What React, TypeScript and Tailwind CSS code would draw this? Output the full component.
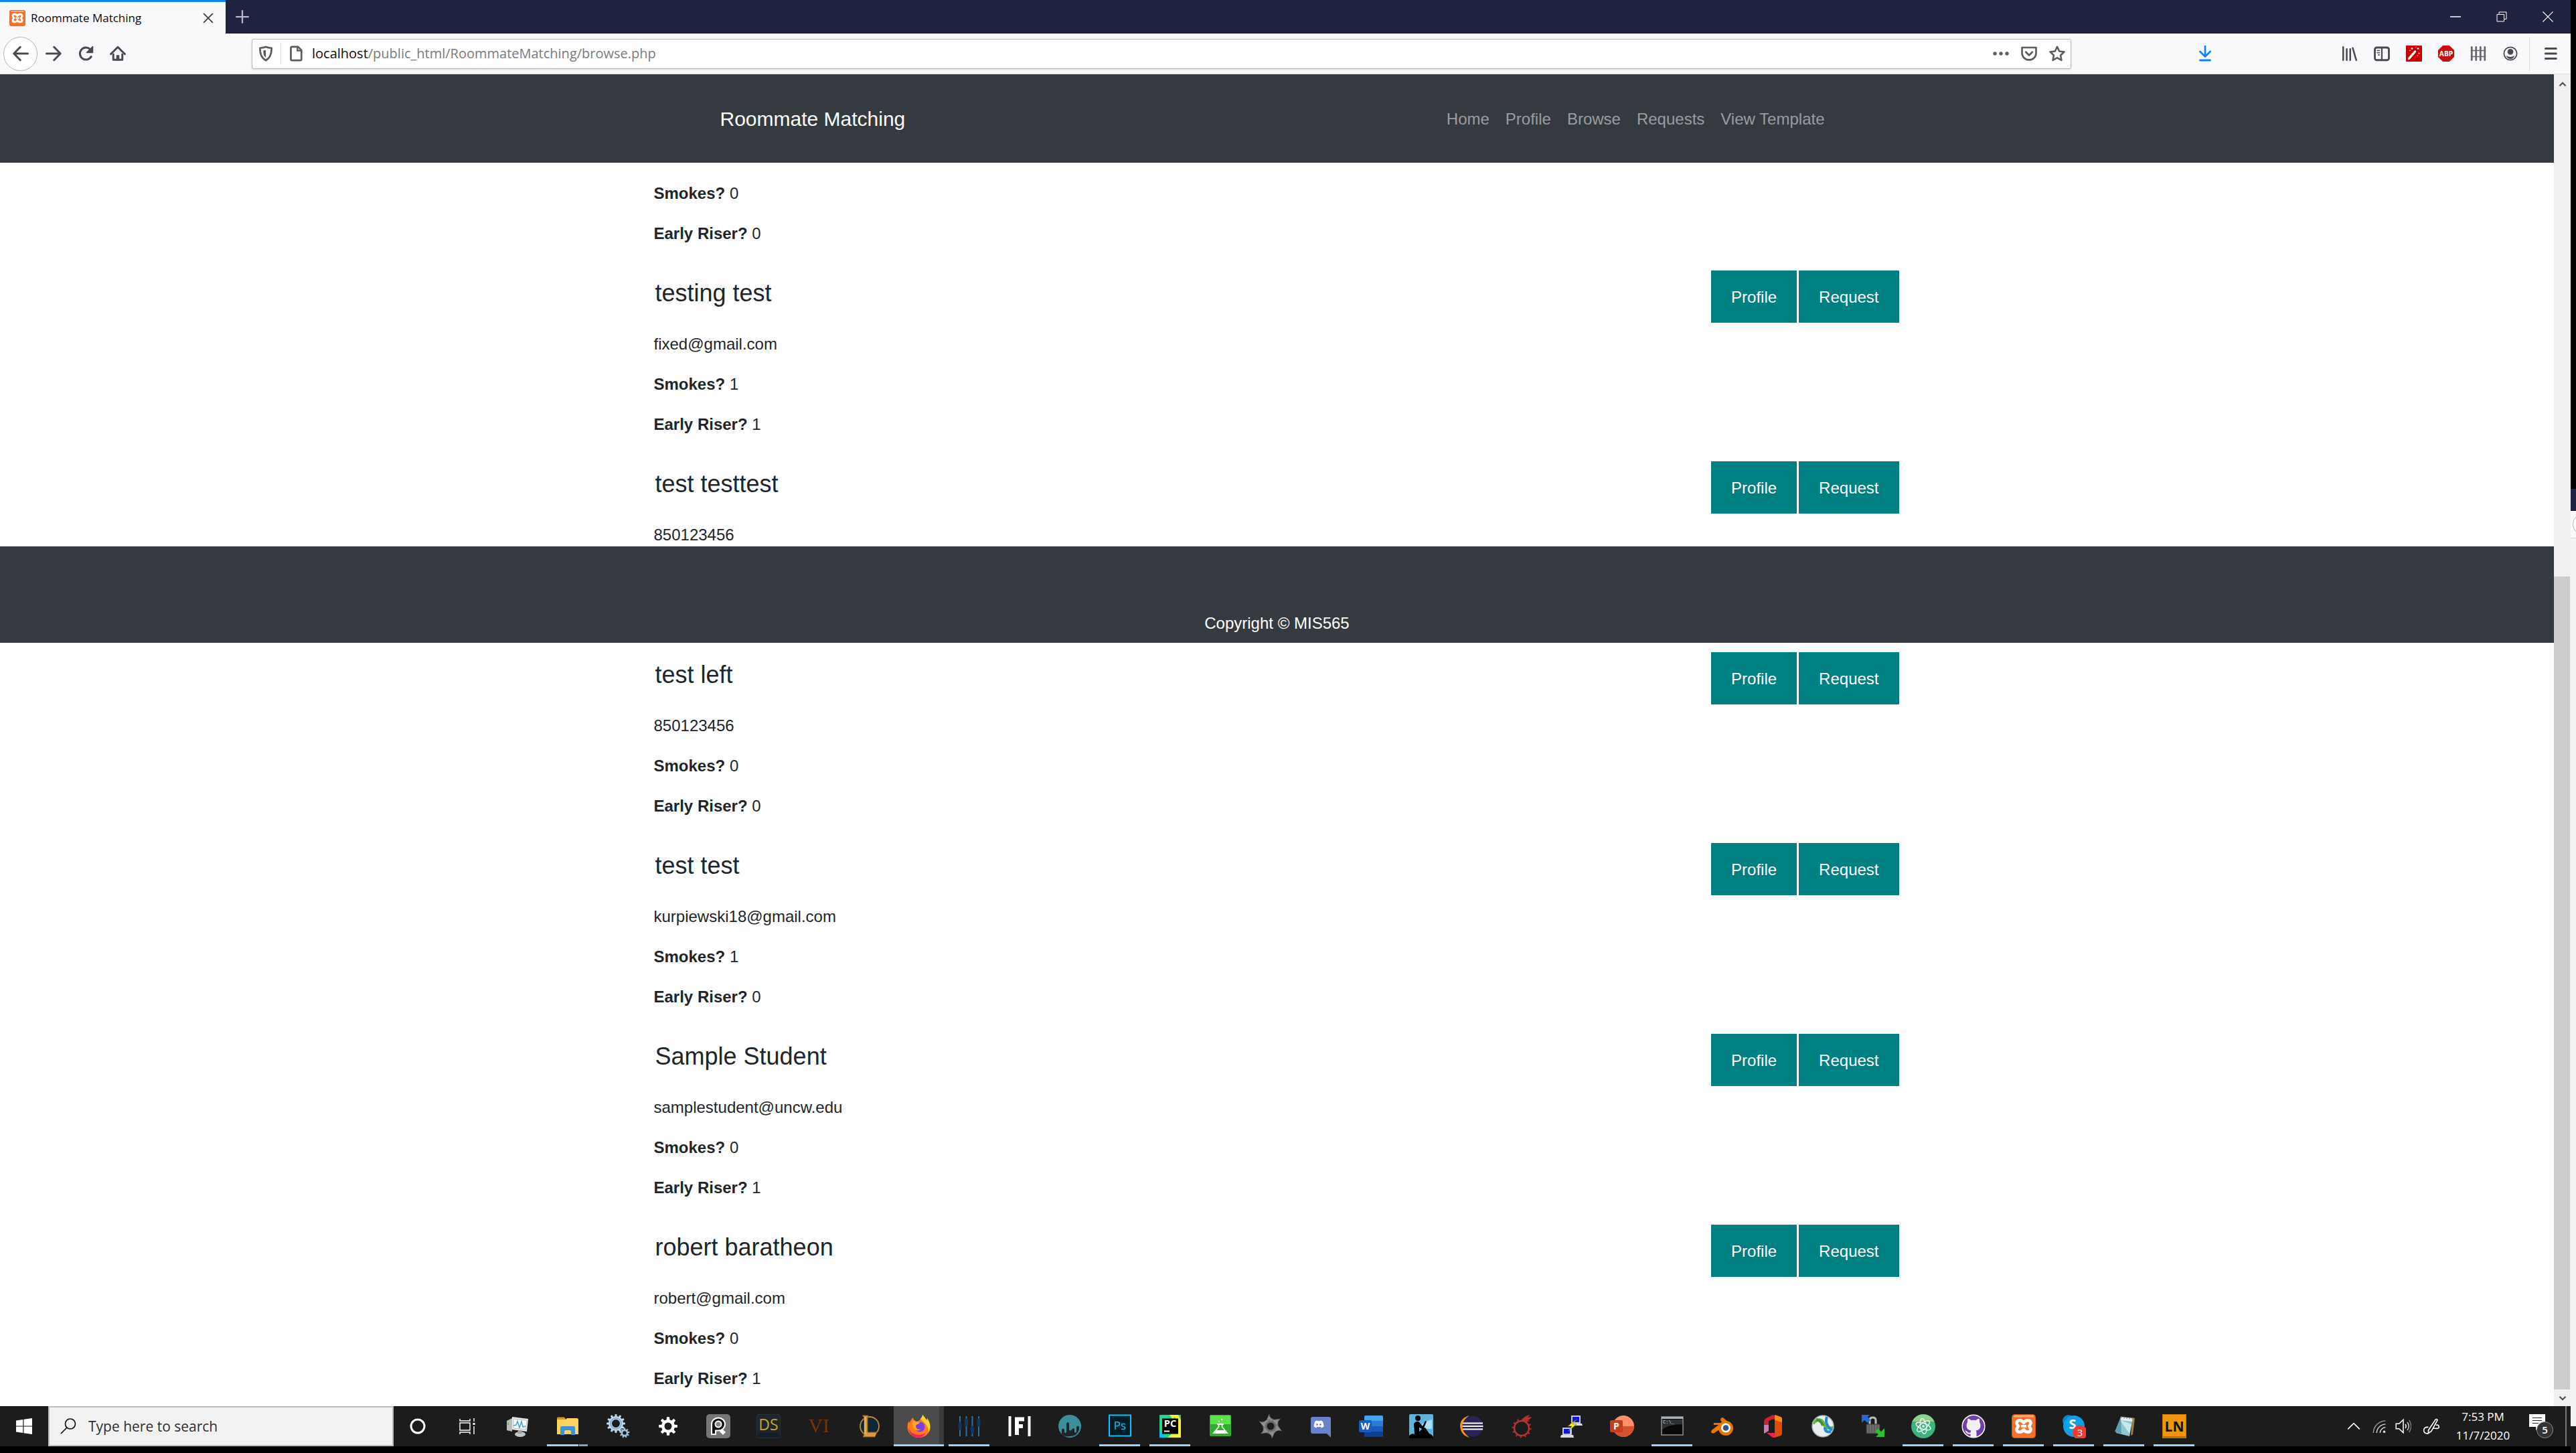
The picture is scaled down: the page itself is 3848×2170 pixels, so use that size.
import React from "react";
import { FaDiscord, FaGithubAlt } from "react-icons/fa";

const uiFont = "font-['Open_Sans','Noto_Sans',sans-serif]";

type Student = { name: string; contact: string; smokes: number; early: number };

const students: Student[] = [
  { name: "testing test", contact: "fixed@gmail.com", smokes: 1, early: 1 },
  { name: "test testtest", contact: "850123456", smokes: 0, early: 0 },
  { name: "test left", contact: "850123456", smokes: 0, early: 0 },
  { name: "test test", contact: "kurpiewski18@gmail.com", smokes: 1, early: 0 },
  { name: "Sample Student", contact: "samplestudent@uncw.edu", smokes: 0, early: 1 },
  { name: "robert baratheon", contact: "robert@gmail.com", smokes: 0, early: 1 },
];

const navLinks = ["Home", "Profile", "Browse", "Requests", "View Template"];

function Svg({ children, size = "size-6", box = "0 0 16 16" }: { children: React.ReactNode; size?: string; box?: string }) {
  return (
    <svg viewBox={box} className={`${size} block shrink-0`} fill="none" aria-hidden="true">
      {children}
    </svg>
  );
}

function XamppMark() {
  return (
    <>
      <rect x="0.5" y="0.5" width="35" height="35" rx="4" fill="#f4712a" stroke="#c9561a" />
      <rect x="3" y="1.5" width="30" height="3" rx="1.5" fill="#f9a878" />
      <path
        d="M18 13C15 8 8 8 7.500 13c0 2.500 2 3.500 2.500 5c-.5 1.500-2.500 2.500-2.500 5c.5 5 7.500 5 10.500 0c3 5 10 5 10.500 0c0-2.500-2-3.500-2.500-5c.5-1.500 2.500-2.500 2.500-5C28 8 21 8 18 13z"
        stroke="#fff"
        strokeWidth="4.5"
        strokeLinejoin="round"
      />
      <path d="M14 18h8" stroke="#fff" strokeWidth="4" />
    </>
  );
}

/* ---------- Browser chrome ---------- */

function TabStrip() {
  return (
    <div className="flex h-[50px] shrink-0 items-stretch justify-between border-b border-[#14152b] bg-[#202340]">
      <div className="flex">
        <div className="-mb-px flex w-[337px] items-center border-t-[3px] border-[#0a84ff] bg-[#f9f9fb] pr-4 pl-3.5">
          <Svg box="0 0 36 36">
            <XamppMark />
          </Svg>
          <span className={`${uiFont} ml-2 flex-1 text-[17px] whitespace-nowrap text-[#0c0c0d]`}>Roommate Matching</span>
          <button type="button" aria-label="Close tab">
            <Svg size="size-5">
              <path d="M2.500 2.500l11 11M13.500 2.500l-11 11" stroke="#444" strokeWidth="1.5" />
            </Svg>
          </button>
        </div>
        <button type="button" aria-label="New tab" className="flex w-[50px] items-center justify-center">
          <Svg>
            <path d="M8 1.500v13M1.500 8h13" stroke="#b9bac6" strokeWidth="1.5" />
          </Svg>
        </button>
      </div>
      <div className="flex">
        <button type="button" aria-label="Minimize" className="flex w-[69px] items-center justify-center">
          <Svg size="size-4">
            <path d="M0 8h16" stroke="#fff" strokeWidth="1.5" />
          </Svg>
        </button>
        <button type="button" aria-label="Restore" className="flex w-[69px] items-center justify-center">
          <Svg size="size-4">
            <path d="M1 4.500h10.500v10.500H1zM4 4.500V1h11v10.500h-3.500" stroke="#fff" strokeWidth="1" />
          </Svg>
        </button>
        <button type="button" aria-label="Close" className="flex w-[69px] items-center justify-center">
          <Svg size="size-4">
            <path d="M0.500 0.500l15 15M15.500 0.500l-15 15" stroke="#fff" strokeWidth="1.2" />
          </Svg>
        </button>
      </div>
    </div>
  );
}

function ToolButton({ label, children }: { label: string; children: React.ReactNode }) {
  return (
    <button type="button" aria-label={label} className="flex size-12 shrink-0 items-center justify-center">
      {children}
    </button>
  );
}

function Toolbar() {
  return (
    <div className="flex h-[61px] shrink-0 items-center border-b border-[#dcdcdf] bg-[#f9f9fb] pl-[5px]">
      <button
        type="button"
        aria-label="Back"
        className="flex size-[51px] shrink-0 items-center justify-center rounded-full border border-[#b5b5b8] bg-white"
      >
        <Svg>
          <path d="M15 8H1.500M7.500 1.500L1.200 8l6.300 6.500" stroke="#4a4a4f" strokeWidth="2" strokeLinecap="round" strokeLinejoin="round" />
        </Svg>
      </button>
      <ToolButton label="Forward">
        <Svg>
          <path d="M1 8h13.500M8.500 1.500L14.800 8l-6.300 6.500" stroke="#4a4a4f" strokeWidth="2" strokeLinecap="round" strokeLinejoin="round" />
        </Svg>
      </ToolButton>
      <ToolButton label="Reload">
        <Svg>
          <path d="M13.500 11A6 6 0 1 1 12.500 3.800" stroke="#4a4a4f" strokeWidth="2" strokeLinecap="round" />
          <path d="M15 1v6H9z" fill="#4a4a4f" stroke="#4a4a4f" strokeLinejoin="round" />
        </Svg>
      </ToolButton>
      <ToolButton label="Home">
        <Svg>
          <path d="M1 8.500L8 1.500l7 7" stroke="#4a4a4f" strokeWidth="2" strokeLinecap="round" strokeLinejoin="round" />
          <path d="M3.500 8v6.200h9V8" stroke="#4a4a4f" strokeWidth="2" strokeLinejoin="round" />
          <path d="M6.500 15V9.500h3V15z" fill="#4a4a4f" />
        </Svg>
      </ToolButton>
      <form
        className="ml-44 flex h-[45px] flex-1 items-center rounded-[3px] border border-[#b8b8bb] bg-white px-2 shadow-sm"
        onSubmit={(e) => e.preventDefault()}
      >
        <Svg>
          <path d="M8 1.300c2 .9 4 1.100 5.800 1.200C13.800 8.500 12.500 12.500 8 14.800C3.500 12.500 2.200 8.500 2.200 2.500C4 2.400 6 2.200 8 1.300z" stroke="#5b5b60" strokeWidth="1.8" strokeLinejoin="round" />
          <path d="M8 4.500v7.500C6 10.500 5.600 8 5.500 5z" fill="#5b5b60" />
        </Svg>
        <span className="mx-2.5 h-8 w-px bg-[#dcdcdf]" />
        <Svg>
          <path d="M3 2.200c0-.6.500-1 1-1h6l3.500 3.500v9c0 .6-.5 1-1 1H4c-.6 0-1-.4-1-1z" stroke="#5b5b60" strokeWidth="1.8" strokeLinejoin="round" />
          <path d="M9.500 1.500V5H13" stroke="#5b5b60" strokeWidth="1.5" />
        </Svg>
        <div className={`${uiFont} relative ml-3 flex h-full flex-1 items-center text-[20px]`}>
          <input aria-label="Address" className="absolute inset-0 w-full bg-transparent outline-none" />
          <span className="pointer-events-none whitespace-nowrap text-[#7a7a7d]">
            <span className="text-[#0c0c0d]">localhost</span>/public_html/RoommateMatching/browse.php
          </span>
        </div>
        <div className="flex gap-[18px]">
          <button type="button" aria-label="Page actions">
            <Svg>
              <circle cx="2" cy="8" r="1.8" fill="#5b5b60" />
              <circle cx="8" cy="8" r="1.8" fill="#5b5b60" />
              <circle cx="14" cy="8" r="1.8" fill="#5b5b60" />
            </Svg>
          </button>
          <button type="button" aria-label="Save to Pocket">
            <Svg>
              <path d="M1 2h14v5.500a7 6.800 0 0 1-14 0z" stroke="#5b5b60" strokeWidth="1.8" strokeLinejoin="round" />
              <path d="M4.800 6.500L8 9.700l3.200-3.200" stroke="#5b5b60" strokeWidth="1.8" strokeLinecap="round" strokeLinejoin="round" />
            </Svg>
          </button>
          <button type="button" aria-label="Bookmark this page">
            <Svg>
              <path d="M8 1.200l2.100 4.500 4.900.6-3.600 3.400.9 4.900L8 12.200l-4.300 2.400.9-4.900L1 6.300l4.900-.6z" stroke="#5b5b60" strokeWidth="1.7" strokeLinejoin="round" />
            </Svg>
          </button>
        </div>
      </form>
      <div className="ml-44 flex">
        <ToolButton label="Downloads">
          <Svg>
            <path d="M8 0.500v10M3 6l5 5 5-5" stroke="#0a84ff" strokeWidth="1.8" strokeLinecap="round" strokeLinejoin="round" />
            <path d="M3 14.600h10" stroke="#0a84ff" strokeWidth="2" strokeLinecap="round" />
          </Svg>
        </ToolButton>
      </div>
      <div className="ml-[168px] flex items-center">
        <ToolButton label="Library">
          <Svg>
            <path d="M1.500 1.500v13M5 3.500v11M8.500 3.500v11M11 2.500l3.500 12" stroke="#4a4a4f" strokeWidth="1.7" strokeLinecap="round" />
          </Svg>
        </ToolButton>
        <ToolButton label="Sidebars">
          <Svg>
            <rect x="1" y="2" width="14" height="12.5" rx="2" stroke="#4a4a4f" strokeWidth="1.9" />
            <path d="M8 2v12.500" stroke="#4a4a4f" strokeWidth="1.5" />
            <path d="M3 5h3M3 7.200h3M4 9.400h2" stroke="#4a4a4f" strokeWidth="1" />
          </Svg>
        </ToolButton>
        <ToolButton label="Cleaner">
          <Svg>
            <rect width="16" height="16" rx="0.5" fill="#c90000" />
            <path d="M3 13l6-7" stroke="#fff" strokeWidth="2.3" strokeLinecap="round" />
            <path d="M6 2v2M5 3h2M12 2v2M11 3h2M13 7v1.500M12.300 7.700h1.500M9.500 1.500h1M3.500 5h1M11 10h1" stroke="#fff" strokeWidth="0.8" />
          </Svg>
        </ToolButton>
        <ToolButton label="Adblock Plus">
          <Svg>
            <path d="M4.700 0h6.600L16 4.700v6.600L11.300 16H4.700L0 11.300V4.700z" fill="#c70d0d" />
            <text x="8" y="10.4" fontSize="6.8" fontWeight="700" fontFamily="Open Sans" textAnchor="middle" fill="#fff">
              ABP
            </text>
          </Svg>
        </ToolButton>
        <ToolButton label="Containers">
          <Svg>
            <path d="M1.500 1.500v13M5.800 1.500v13M10.200 1.500v13M14.500 1.500v13" stroke="#67676b" strokeWidth="1.8" strokeLinecap="round" />
            <path d="M0.500 5h15M0.500 11h15" stroke="#67676b" strokeWidth="1" />
          </Svg>
        </ToolButton>
        <ToolButton label="Account">
          <Svg>
            <circle cx="8" cy="8" r="6.4" stroke="#4a4a4f" strokeWidth="1.2" />
            <circle cx="8" cy="6.2" r="2.9" fill="#4a4a4f" />
            <path d="M3.800 10q4.200 2.500 8.400 0q-1 3.300-4.200 3.300T3.800 10z" fill="#4a4a4f" />
          </Svg>
        </ToolButton>
        <span className="ml-1 h-[51px] w-px bg-[#dcdcdf]" />
        <button type="button" aria-label="Open menu" className="mr-[18px] ml-[19px] flex h-12 items-center">
          <Svg>
            <path d="M3 3h10.500M3 8h10.500M3 13h10.500" stroke="#4a4a4f" strokeWidth="2" strokeLinecap="round" />
          </Svg>
        </button>
      </div>
    </div>
  );
}

/* ---------- Web page ---------- */

function Fact({ label, value }: { label: string; value: number }) {
  return (
    <p className="mb-6">
      <b>{label}</b> {value}
    </p>
  );
}

function StudentRow({ student }: { student: Student }) {
  return (
    <article className="flex items-start justify-between">
      <div>
        <h4 className="mt-[25px] mb-[37px] px-0.5 text-[36px] leading-[43px]">{student.name}</h4>
        <p className="mb-6">{student.contact}</p>
        <Fact label="Smokes?" value={student.smokes} />
        <Fact label="Early Riser?" value={student.early} />
      </div>
      <div className="mt-[13px] flex gap-[3px] text-white">
        <button type="button" className="bg-[#008080] px-[30px] pt-[22px] pb-5">
          Profile
        </button>
        <button type="button" className="bg-[#008080] px-[30px] pt-[22px] pb-5">
          Request
        </button>
      </div>
    </article>
  );
}

function WebPage() {
  return (
    <div className="relative min-w-0 flex-1 overflow-hidden bg-white font-['Liberation_Sans',Arial,sans-serif] text-[24px] leading-[36px] text-[#212529]">
      <nav className="flex h-[132px] items-center bg-[#343a40] pr-0.5">
        <div className="mx-auto flex w-[1710px] items-center justify-between px-6">
          <a href="#home" className="text-[30px] leading-[45px] text-white">
            Roommate Matching
          </a>
          <ul className="flex">
            {navLinks.map((l) => (
              <li key={l}>
                <a href="#page" className="block px-3 pt-3.5 pb-3 text-white/50">
                  {l}
                </a>
              </li>
            ))}
          </ul>
        </div>
      </nav>
      <main className="mx-auto w-[1862px] pt-7 pr-0.5">
        <Fact label="Smokes?" value={0} />
        <Fact label="Early Riser?" value={0} />
        {students.map((s) => (
          <StudentRow key={s.name} student={s} />
        ))}
      </main>
      <footer className="absolute inset-x-0 top-[705px] bg-[#343a40] pt-[97px] pb-[11px] text-center text-white">
        <p>Copyright © MIS565</p>
      </footer>
    </div>
  );
}

function ScrollBar() {
  return (
    <div className="flex w-[25px] shrink-0 flex-col items-center bg-[#f0f0f0]">
      <button type="button" aria-label="Scroll up" className="flex h-[30px] items-center">
        <Svg size="size-3">
          <path d="M2 11l6-6 6 6" stroke="#505050" strokeWidth="3" />
        </Svg>
      </button>
      <div className="flex w-full flex-1 flex-col pr-px">
        <div className="grow-[720]" />
        <div className="grow-[1214] bg-[#cdcdcd]" />
      </div>
      <button type="button" aria-label="Scroll down" className="flex h-[25px] items-center">
        <Svg size="size-3">
          <path d="M2 5l6 6 6-6" stroke="#505050" strokeWidth="3" />
        </Svg>
      </button>
    </div>
  );
}

/* ---------- Taskbar ---------- */

type TaskbarApp = { name: string; open?: boolean; active?: boolean; stacked?: boolean; art: React.ReactNode };

function gearPath(cx: number, cy: number, outer: number, inner: number, teeth: number) {
  const pts: string[] = [];
  for (let i = 0; i < teeth; i++) {
    const a = (i / teeth) * Math.PI * 2;
    const s = (Math.PI * 2) / teeth;
    [
      [a - s * 0.3, inner],
      [a - s * 0.18, outer],
      [a + s * 0.18, outer],
      [a + s * 0.3, inner],
    ].forEach(([t, r]) => pts.push(`${(cx + Math.sin(t) * r).toFixed(2)},${(cy - Math.cos(t) * r).toFixed(2)}`));
  }
  return `M${pts.join("L")}Z`;
}

function hole(cx: number, cy: number, r: number) {
  return `M${cx - r},${cy}a${r},${r} 0 1 0 ${2 * r},0a${r},${r} 0 1 0 ${-2 * r},0Z`;
}

const label = { fontFamily: "Open Sans", textAnchor: "middle" as const };

const apps: TaskbarApp[] = [
  {
    name: "Resource Monitor",
    art: (
      <>
        <path d="M2 10l8-4v20l-8-2z" fill="#b9bdbb" />
        <path d="M3 13l2-1v4l-2 0z" fill="#5fc43a" />
        <path d="M10 4l24 3-2 19-22-3z" fill="#e8eaec" />
        <path d="M12 7l20 2-2 14-18-2z" fill="#f6fbff" stroke="#b8c2ca" />
        <path d="M12 17l4-1 2-5 3 9 3-9 2 8 4-1" stroke="#4d9cd6" strokeWidth="1.5" />
        <ellipse cx="22" cy="30" rx="8" ry="4" fill="#c3c6c8" />
        <path d="M19 24h5l1 5h-7z" fill="#9da1a4" />
      </>
    ),
  },
  {
    name: "File Explorer",
    open: true,
    stacked: true,
    art: (
      <>
        <path d="M2 6c0-1 1-1.500 2-1.500h9l3 4H2z" fill="#d99a0b" />
        <path d="M2 8h13l2-2h15c1 0 2 1 2 2v22H2z" fill="#ffd45e" />
        <path d="M7 31V20c0-1 1-2 2-2h18c1 0 2 1 2 2v11h-6v-5c0-1-1-2-2-2h-6c-1 0-2 1-2 2v5z" fill="#3b95dc" />
      </>
    ),
  },
  {
    name: "Services",
    art: (
      <>
        <path fillRule="evenodd" d={gearPath(15, 14, 14, 11, 12) + hole(15, 14, 6)} fill="#bcd7ee" />
        <circle cx="15" cy="14" r="8" stroke="#7da6cb" strokeWidth="1.5" />
        <path fillRule="evenodd" d={gearPath(28, 28, 7.5, 5.5, 9) + hole(28, 28, 2.8)} fill="#9dbfdc" />
      </>
    ),
  },
  { name: "Settings", art: <path fillRule="evenodd" d={gearPath(18, 18, 14, 10, 8) + hole(18, 18, 5.5)} fill="#fff" /> },
  {
    name: "Search Tool",
    art: (
      <>
        <rect width="36" height="36" rx="5" fill="#767676" />
        <path d="M8 30V15a10 9.500 0 1 1 10 9.500h-4V30z" fill="#111" stroke="#fff" strokeWidth="2" />
        <circle cx="18" cy="15" r="4.5" fill="#8a8a8a" stroke="#fff" strokeWidth="2" />
        <path d="M24 22l5 5-4 4-5-5z" fill="#fff" />
      </>
    ),
  },
  {
    name: "DS",
    art: (
      <>
        <rect x="0.5" y="0.5" width="35" height="35" rx="2" fill="#1f262b" stroke="#263139" />
        <rect x="1" y="28" width="34" height="7" fill="#161f29" />
        <text x="18" y="24" fontSize="23" {...label} fill="#c9a62c">
          DS
        </text>
      </>
    ),
  },
  {
    name: "VI",
    art: (
      <text x="18" y="27" fontSize="30" fontFamily="Liberation Serif" textAnchor="middle" fill="#79310c">
        VI
      </text>
    ),
  },
  {
    name: "League of Legends",
    art: (
      <>
        <circle cx="19" cy="18" r="14" fill="#0c2636" stroke="#b98a3a" strokeWidth="1.8" />
        <path d="M8 2h9l-1 3v22h14l-3 7H9l2-4V5z" fill="#d9993c" stroke="#8c5516" />
        <path d="M12 4v26" stroke="#f3c36b" strokeWidth="1.5" />
      </>
    ),
  },
  {
    name: "Firefox",
    open: true,
    active: true,
    art: (
      <>
        <path d="M23 1c4 4 5 6 6 8c1-1 1-2 1-3c6 8 6 17 1 23c-7 8-20 8-27 0C-1 23 0 14 3 10c0 2 1 3 1 3C5 9 7 7 9 5c0 3 2 5 5 6c4-1 5-2 6-4c2-2 3-4 3-6z" fill="#ff7a1a" />
        <path d="M23 1c4 4 5 6 6 8c1-1 1-2 1-3c6 9 5 16 2 21c0-8-3-12-12-20c2-2 3-4 3-6z" fill="#ffd43a" />
        <path d="M2 20c3 10 15 14 26 8c-3 5-8 7-11 7C8 35 2 28 2 20z" fill="#f5245e" />
        <circle cx="19" cy="19" r="7.5" fill="#7a3fe0" />
        <path d="M9 9c3 2 5 2 10 3c-1 3-4 3-6 5c0 5 4 7 8 5c-6 6-16 0-12-13z" fill="#ffa52b" />
      </>
    ),
  },
  {
    name: "Mixer",
    open: true,
    art: (
      <>
        <path d="M4 3v30M13.500 3v30M22.500 3v30M32 3v30" stroke="#336f9e" strokeWidth="2" />
        <path d="M4 14v7M13.500 9v7M22.500 20v7M32 9v7" stroke="#133763" strokeWidth="5" strokeLinecap="round" />
      </>
    ),
  },
  {
    name: "Frame",
    art: (
      <>
        <path d="M3.500 3v30M32.500 3v30" stroke="#fff" strokeWidth="4" />
        <path d="M14 5v26M11 7.500h14M11 18h12" stroke="#fff" strokeWidth="6" />
      </>
    ),
  },
  {
    name: "Sonar",
    art: (
      <>
        <circle cx="18" cy="18" r="17" fill="#3a8f9b" />
        <path d="M6 30V23q2-3 4 0v4q2 3 3-1V14q3-4 4 0v9q2 3 4 0q3-4 4 0v4q3 2 3-2v-6q2-3 4 0v4q-3 10-14 10Q10 34 6 30z" fill="#1e2427" />
      </>
    ),
  },
  {
    name: "Photoshop",
    open: true,
    art: (
      <>
        <rect x="2" y="1.5" width="32" height="31" fill="#001d26" stroke="#00c8ff" strokeWidth="2" />
        <text x="18" y="23" fontSize="17" {...label} fill="#00c8ff">
          Ps
        </text>
      </>
    ),
  },
  {
    name: "PyCharm",
    open: true,
    art: (
      <>
        <rect x="2" y="1" width="32" height="34" rx="1" fill="#21d789" />
        <path d="M24 1h6l4 8v26H14l16-14z" fill="#f5ef45" />
        <path d="M2 24l10 11H2z" fill="#07c3f2" />
        <path d="M17 1h10l-5 7z" fill="#f5ef45" />
        <rect x="6" y="6.5" width="24" height="23" fill="#000" />
        <text x="18" y="19" fontSize="14.5" {...label} fontWeight="700" fill="#fff">
          PC
        </text>
        <path d="M9 25.500h8" stroke="#fff" strokeWidth="2" />
      </>
    ),
  },
  {
    name: "Lab",
    art: (
      <>
        <rect x="2" y="1" width="32" height="32" rx="2" fill="#2fae2b" />
        <path d="M3 2h30v13H3z" fill="#5ce04d" />
        <path d="M13 15h10M15.500 15v4L8 28h20l-7.500-9v-4" stroke="#fff" strokeWidth="1.8" />
        <path d="M12.500 24h11l3 4h-17z" fill="#fff" />
        <circle cx="16" cy="11" r="1" fill="#fff" />
        <circle cx="20" cy="8" r="1" fill="#fff" />
      </>
    ),
  },
  {
    name: "Shutter",
    art: (
      <>
        {[0, 60, 120, 180, 240, 300].map((a) => (
          <path key={a} transform={`rotate(${a} 18 18)`} d="M11 11L16 0q0 6 7 8l3 5q-6-3-10-1z" fill="#8e8e8e" stroke="#5f5f5f" strokeWidth="0.6" />
        ))}
        <circle cx="18" cy="18" r="7" stroke="#6d6d6d" strokeWidth="3" />
      </>
    ),
  },
  {
    name: "Discord",
    art: (
      <>
        <path d="M3 7c0-2 1-3 3-3h24c2 0 3 1 3 3v28l-6-6H6c-2 0-3-1-3-3z" fill="#6b82cb" />
        <FaDiscord x="7" y="7" width="22" height="22" color="#fff" />
      </>
    ),
  },
  {
    name: "Word",
    art: (
      <>
        <rect x="8" y="2" width="28" height="32" rx="2" fill="#2b7cd3" />
        <path d="M8 10V4c0-1 1-2 2-2h24c1 0 2 1 2 2v6z" fill="#41a5ee" />
        <path d="M8 18h28v8H8z" fill="#185abd" />
        <path d="M8 26h28v6c0 1-1 2-2 2H10c-1 0-2-1-2-2z" fill="#103f91" />
        <rect x="0" y="9" width="19" height="18" rx="2" fill="#185abd" />
        <text x="9.5" y="23" fontSize="14" {...label} fontWeight="700" fill="#fff">
          W
        </text>
      </>
    ),
  },
  {
    name: "Kindle",
    art: (
      <>
        <rect width="36" height="36" rx="2" fill="#5fb4dc" />
        <path d="M4 22h30V8q-8 2-16 8z" fill="#a8e0f5" />
        <circle cx="13" cy="6" r="4" fill="#000" />
        <path d="M7 14q5-6 9-1l4 5 4-8 2 1-5 12-6-3v6l7-6q3 0 4 3l4 6q4 1 6 5v2H0v-4q4-4 8-2z" fill="#000" />
      </>
    ),
  },
  {
    name: "Eclipse",
    art: (
      <>
        <path d="M15 2C3 5-1 14 2 23c2 7 7 10 13 12C7 28 5 24 5 18S8 7 15 2z" fill="#f7941e" />
        <circle cx="20" cy="18" r="15.5" fill="#2c2255" />
        <path d="M5 13.500h30M4.500 18h31M5 22.500h30" stroke="#fff" strokeWidth="2" />
      </>
    ),
  },
  {
    name: "Dragon Ring",
    art: (
      <>
        <circle cx="18" cy="21" r="11" stroke="#b3342f" strokeWidth="2.5" />
        <circle cx="18" cy="21" r="13" stroke="#b3342f" strokeWidth="3" strokeDasharray="2 4.8" />
        <path d="M18 10q2-7 13-9l-4 4 6-1q-3 5-7 5l4 1q-6 3-12 0z" fill="#b3342f" />
      </>
    ),
  },
  {
    name: "PuTTY",
    art: (
      <>
        <path d="M17 2h14v12H17z" fill="#c8c8c8" />
        <path d="M19 4h10v8H19z" fill="#0a12e8" />
        <path d="M15 14h18l1 3H18z" fill="#ddd" />
        <path d="M4 20h14v11H4z" fill="#c8c8c8" />
        <path d="M6 22h9v7H6z" fill="#0a12e8" />
        <path d="M2 31h18l1 4H1z" fill="#ddd" />
        <path d="M26 7L12 18h6l-6 8 13-11h-6z" fill="#fbf500" stroke="#5c5a00" strokeWidth="0.5" />
      </>
    ),
  },
  {
    name: "PowerPoint",
    art: (
      <>
        <circle cx="20" cy="18" r="16" fill="#ff8f6b" />
        <path d="M4 18h32a16 16 0 0 1-32 0z" fill="#d35230" />
        <rect x="0" y="9" width="19" height="18" rx="2" fill="#c43e1c" />
        <text x="9.5" y="23" fontSize="14" {...label} fontWeight="700" fill="#fff">
          P
        </text>
      </>
    ),
  },
  {
    name: "Command Prompt",
    open: true,
    art: (
      <>
        <rect x="2" y="4" width="32" height="27" fill="#0a0a0a" stroke="#8a9197" strokeWidth="1.5" />
        <path d="M2 4h32v3H2z" fill="#a9b1b8" />
        <path d="M3 8h30v7q-20 0-30 8z" fill="#303030" />
        <text x="4" y="14" fontSize="7" fontFamily="Liberation Mono" fill="#ddd">
          C:\_
        </text>
      </>
    ),
  },
  {
    name: "Blender",
    art: (
      <>
        <path d="M17 5q3 0 4 2l9 8-6 1H5q-1-3 1-3h12l-3-4q0-3 2-4z" fill="#ea7600" />
        <path d="M1 27q0-3 2-4l13-10 5 5-15 10q-3 2-5-1z" fill="#ea7600" />
        <circle cx="23" cy="21" r="11" fill="#ea7600" />
        <circle cx="23" cy="20.5" r="7" fill="#fff" />
        <circle cx="23" cy="20.5" r="4.3" fill="#265787" />
      </>
    ),
  },
  {
    name: "Office",
    art: (
      <>
        <path d="M18 1l-8 4q-5 2-5 7v17l7-5V12q0-2 2-3l8-2V3z" fill="#c52232" />
        <path d="M5 16v13l7-4v-9z" fill="#d277b8" />
        <path d="M21 1l9 3q2 1 2 3v22q0 2-2 3l-9 3z" fill="#e04a0b" />
        <path d="M21 1l9 3q2 1 2 3v5L21 9z" fill="#fb8a16" />
        <path d="M9 28h13v7h-4z" fill="#e2264f" />
      </>
    ),
  },
  {
    name: "AnyConnect",
    art: (
      <>
        <circle cx="18" cy="18" r="16" fill="#e9eef0" />
        <path d="M3 14Q15 2 20 16q2 7 14 4" stroke="#6cb33f" strokeWidth="4.5" />
        <path d="M8 8q7 1 10 9" stroke="#3f9330" strokeWidth="4" />
        <path d="M24 4q-4 12 8 20M21 20q0 8 9 6" stroke="#1f8ccc" strokeWidth="4" />
        <circle cx="18" cy="18" r="16" stroke="#9fb5c2" strokeWidth="1.5" />
      </>
    ),
  },
  {
    name: "WinSCP",
    art: (
      <>
        <path d="M13 16V9q0-4 4.500-4T22 9v7" stroke="#b9b9b9" strokeWidth="3" />
        <rect x="8" y="15" width="20" height="14" fill="#6e6e6e" stroke="#333" />
        <path d="M12 15v14M16 15v14M20 15v14M24 15v14" stroke="#4d4d4d" />
        <path d="M1 1h12l-3 3 4 5-4 4-5-4-4 4z" fill="#2767d9" />
        <path d="M35 34H22l4-4-5-4 4-4 5 4 5-5z" fill="#27c42a" />
      </>
    ),
  },
  {
    name: "Atom",
    open: true,
    art: (
      <>
        <circle cx="18" cy="18" r="18" fill="#3bb37b" />
        <path d="M1.500 11a18 18 0 0 1 33 0z" fill="#8fd08a" />
        {[20, 80, 140].map((a) => (
          <ellipse key={a} transform={`rotate(${a} 18 18)`} cx="18" cy="18" rx="11.5" ry="4.5" stroke="#fff" strokeWidth="1.3" />
        ))}
        <circle cx="18" cy="18" r="1.8" fill="#fff" />
      </>
    ),
  },
  {
    name: "GitHub Desktop",
    open: true,
    art: (
      <>
        <circle cx="18" cy="18" r="16.8" fill="#6f3fae" stroke="#fff" strokeWidth="1.5" />
        <path d="M9 9q0-2 1-2.500q2 .5 4.500 2.500q3.500-.6 7 0q2.500-2 4.500-2.500q1 .5 1 2.500q.3 1.500 0 3q1.500 2 1.500 5q0 7-7 7.500q1 1 1 3v7h-9v-5q-5 1-7-3q-1-1.500-1.500-2q2-.5 4 2q1.500 2 4.500 1q0-2 1-3q-7-.5-7-7.500q0-3 1.500-5q-.3-1.500 0-3z" fill="#f1f1f4" />
      </>
    ),
  },
  { name: "XAMPP", open: true, art: <XamppMark /> },
  {
    name: "Skype",
    open: true,
    art: (
      <>
        <circle cx="10" cy="10" r="9" fill="#0a84d0" />
        <circle cx="18" cy="18" r="16" fill="#10a0e8" />
        <text x="16" y="22" fontSize="20" {...label} fontWeight="700" fill="#fff">
          S
        </text>
        <circle cx="27" cy="27.5" r="11" fill="#f03a34" />
        <text x="27" y="32.5" fontSize="14" {...label} fill="#fff">
          3
        </text>
      </>
    ),
  },
  {
    name: "Notepad",
    open: true,
    art: (
      <>
        <path d="M30 5l4 1-3 24-3 2z" fill="#a27d3c" />
        <path d="M13 4l18 2-5 27-20-5z" fill="#8fc6cf" />
        <path d="M13 4l18 2-1 5-18-2z" fill="#e6eef0" />
        <path d="M12 9l14 20 3-14z" fill="#c9e8ec" />
        <path d="M13 4l-9 22 10 4z" fill="#5f9fab" />
        <path d="M14 3v3M18 3.500v3M22 4v3M26 4.500v3M30 5v3" stroke="#6d7477" />
      </>
    ),
  },
  {
    name: "LN",
    open: true,
    art: (
      <>
        <rect x="0.5" y="0.5" width="35" height="35" fill="#f0960a" stroke="#c97a05" />
        <text x="18" y="26" fontSize="21" {...label} fontWeight="700" fill="#111">
          LN
        </text>
        <path d="M1 34h34" stroke="#a86200" strokeWidth="1.5" />
      </>
    ),
  },
];

function Taskbar() {
  return (
    <div className={`${uiFont} flex h-[60px] shrink-0 items-stretch bg-[#1c1c1c] text-white`}>
      <button type="button" aria-label="Start" className="flex w-[72px] items-center justify-center">
        <Svg size="size-6" box="0 0 24 24">
          <path d="M0 3.400L10.300 2v9.500H0zM11.500 1.800L24 0v11.500H11.500zM0 12.600h10.300V22L0 20.600zM11.500 12.600H24V24l-12.500-1.800z" fill="#fff" />
        </Svg>
      </button>
      <label className="flex w-[516px] items-center border-2 border-[#bdbdbd] bg-[#f2f2f2] pl-4">
        <Svg size="size-6" box="0 0 24 24">
          <circle cx="15" cy="8.5" r="7.5" stroke="#111" strokeWidth="1.7" />
          <path d="M10 14L1 23" stroke="#111" strokeWidth="1.7" />
        </Svg>
        <input
          aria-label="Search"
          className="ml-[18px] flex-1 bg-transparent pt-0.5 text-[21px] outline-none placeholder:text-[#2e2e2e]"
          placeholder="Type here to search"
        />
      </label>
      <button type="button" aria-label="Cortana" className="flex w-[72px] items-center justify-center">
        <Svg size="size-6" box="0 0 24 24">
          <circle cx="12" cy="12" r="10" stroke="#fff" strokeWidth="3" />
        </Svg>
      </button>
      <button type="button" aria-label="Task View" className="flex w-[75px] items-center justify-center">
        <Svg size="size-6" box="0 0 24 24">
          <path d="M1 7h15v11H1zM1 1v3h15V1M1 24v-3h15v3M22 0v5M22 12v12" stroke="#fff" strokeWidth="1.4" />
          <path d="M20.500 7h3v3h-3z" fill="#fff" />
        </Svg>
      </button>
      {apps.map((app) => (
        <button key={app.name} type="button" aria-label={app.name} className="flex w-[75px] flex-col items-center">
          <span
            className={`flex w-full flex-1 items-center justify-center pt-[3px] ${
              app.active ? "bg-[#4b4b4b] shadow-[inset_-7px_0_0_#3a3a3a]" : ""
            }`}
          >
            <Svg size="size-9" box="0 0 36 36">
              {app.art}
            </Svg>
          </span>
          <span className={`flex h-[3px] ${app.active ? "w-full" : "w-[61px]"}`}>
            {app.open && <span className="flex-1 bg-[#a3d3fb]" />}
            {app.stacked && <span className="w-3.5 border-l border-[#333] bg-[#7fa5c4]" />}
          </span>
        </button>
      ))}
      <div className="ml-auto flex items-center">
        <button type="button" aria-label="Show hidden icons">
          <Svg size="size-5">
            <path d="M1 11.500L8 4.500l7 7" stroke="#fff" strokeWidth="1.3" />
          </Svg>
        </button>
        <button type="button" aria-label="Network" className="ml-[18px]">
          <Svg size="size-5">
            <path d="M1 16A15 15 0 0 1 15.500 1.500" stroke="#999" strokeWidth="1.1" />
            <path d="M5 16A11 11 0 0 1 15.500 5.500M9 16A7 7 0 0 1 15.500 9.300" stroke="#ddd" strokeWidth="1.1" />
            <circle cx="14" cy="14.5" r="1.4" fill="#fff" />
          </Svg>
        </button>
        <button type="button" aria-label="Volume" className="ml-3.5">
          <Svg size="size-6">
            <path d="M0.800 5.500h3L8 1.500v13l-4.200-4h-3z" stroke="#fff" strokeWidth="1" />
            <path d="M10 6q1.500 2 0 4" stroke="#fff" />
            <path d="M12 4q3 4 0 8" stroke="#ccc" />
            <path d="M13.800 2q4 6 0 12" stroke="#777" />
          </Svg>
        </button>
        <button type="button" aria-label="Pen" className="ml-[18px]">
          <Svg size="size-6">
            <path d="M5 12l7-10.500q1.500-1.200 2 .5L8 13l-3 2zM5 9q-5-.5-4.500 4q1 3 5 2M10 10q6 1 5.500-1.500T12.500 7" stroke="#fff" strokeWidth="1.1" />
          </Svg>
        </button>
        <button type="button" className="ml-[22px] flex w-[86px] flex-col items-center text-[17px] leading-7 whitespace-nowrap">
          <span>7:53 PM</span>
          <span>11/7/2020</span>
        </button>
        <button type="button" aria-label="Notifications" className="relative mr-[18px] ml-[26px] h-9 w-9">
          <svg viewBox="0 0 36 36" className="size-9" fill="none" aria-hidden="true">
            <path d="M0 0h24v19H15l-5 5v-5H0z" fill="#fff" />
            <path d="M5 5.500h14M5 9.500h14M5 13.500h9" stroke="#222" strokeWidth="1" />
          </svg>
          <span className="absolute right-0 bottom-0 flex size-[25px] items-center justify-center rounded-full border border-[#8a8a8a] bg-[#333] text-[15px] leading-none font-semibold">
            5
          </span>
        </button>
        <span className="mr-1.5 h-full w-0.5 bg-[#777]" />
      </div>
    </div>
  );
}

/* Sliver of the neighbouring monitor, showing the edge of another window. */
function NextMonitor() {
  return (
    <div className="flex w-2 shrink-0 flex-col overflow-hidden bg-[#f2f2f2]">
      <div className="h-[730px] shrink-0 bg-black" />
      <div className="h-[33px] shrink-0 border-b border-[#14152b] bg-[#202340]" />
      <div className="flex h-[41px] shrink-0 items-center border-b border-[#dcdcdf] bg-[#f9f9fb] pl-[3px]">
        <span className="size-8 shrink-0 rounded-full border border-[#b5b5b8] bg-white" />
      </div>
      <div className="flex-1" />
      <div className="h-10 shrink-0 bg-[#1c1c1c]" />
    </div>
  );
}

export default function App() {
  return (
    <div className="flex h-screen overflow-hidden bg-black">
      <div className="flex min-w-0 flex-1 flex-col pb-2.5">
        <TabStrip />
        <Toolbar />
        <div className="flex min-h-0 flex-1">
          <WebPage />
          <ScrollBar />
        </div>
        <Taskbar />
      </div>
      <NextMonitor />
    </div>
  );
}
